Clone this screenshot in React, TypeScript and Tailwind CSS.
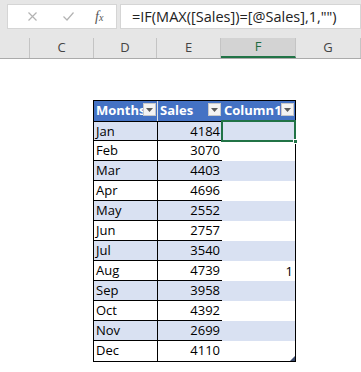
import React from "react";

const months = [
  { m: "Jan", s: 4184, c: "" },
  { m: "Feb", s: 3070, c: "" },
  { m: "Mar", s: 4403, c: "" },
  { m: "Apr", s: 4696, c: "" },
  { m: "May", s: 2552, c: "" },
  { m: "Jun", s: 2757, c: "" },
  { m: "Jul", s: 3540, c: "" },
  { m: "Aug", s: 4739, c: "1" },
  { m: "Sep", s: 3958, c: "" },
  { m: "Oct", s: 4392, c: "" },
  { m: "Nov", s: 2699, c: "" },
  { m: "Dec", s: 4110, c: "" },
];

const font = { fontFamily: '"Open Sans", "Noto Sans", sans-serif' };

function Dropdown() {
  return (
    <div className="absolute right-[1px] top-[2px] flex h-[13px] w-[13px] items-center justify-center border border-[#c8c8c8] bg-[#f3f3f3]">
      <svg width="7" height="4" viewBox="0 0 7 4">
        <path d="M0 0 L7 0 L3.5 4 Z" fill="#5a5a5a" />
      </svg>
    </div>
  );
}

function ColHead({ label, w, selected }: { label: string; w: string; selected?: boolean }) {
  return (
    <div
      className={`flex h-full items-center justify-center border-r border-[#c4c4c4] text-[13px] ${w} ${
        selected ? "border-b-2 border-b-[#217346] bg-[#d3d3d3] text-[#1e6b41]" : "text-[#444]"
      }`}
    >
      {label}
    </div>
  );
}

export default function App() {
  return (
    <div className="h-[372px] w-[361px] overflow-hidden bg-white" style={font}>
      {/* formula bar */}
      <div className="flex h-[35px] items-start gap-[3px] bg-[#e6e6e6] pl-[7px] pt-[4px]">
        <div className="flex h-[25px] w-[110px] items-center border border-[#d5d5d5] bg-white">
          <svg className="ml-[20px]" width="9" height="9" viewBox="0 0 9 9">
            <path d="M0.5 0.5 L8.5 8.5 M8.5 0.5 L0.5 8.5" stroke="#b3b3b3" strokeWidth="1.2" />
          </svg>
          <svg className="ml-[26px]" width="11" height="9" viewBox="0 0 11 9">
            <path d="M0.5 4.5 L4 8 L10.5 0.5" stroke="#b3b3b3" strokeWidth="1.2" fill="none" />
          </svg>
          <span
            className="ml-[21px] text-[14px] italic text-[#555]"
            style={{ fontFamily: '"Liberation Serif", serif' }}
          >
            f<span className="text-[10px]">x</span>
          </span>
        </div>
        <div className="flex h-[25px] flex-1 items-center border border-[#d5d5d5] bg-white pl-[11px] text-[14.5px] text-[#222]">
          =IF(MAX([Sales])=[@Sales],1,"")
        </div>
      </div>

      {/* column headers */}
      <div className="flex h-[24px] bg-[#e6e6e6] pt-[3px]">
        <div className="flex h-full border-b border-[#ababab]">
          <div className="h-full w-[30px] border-r border-[#c4c4c4]" />
          <ColHead label="C" w="w-[64px]" />
          <ColHead label="D" w="w-[63px]" />
          <ColHead label="E" w="w-[64px]" />
          <ColHead label="F" w="w-[75px]" selected />
          <ColHead label="G" w="w-[65px]" />
        </div>
      </div>

      {/* table */}
      <div className="ml-[93px] mt-[41px] w-[203px] border border-black text-[13px] text-black">
        <div className="flex h-[20px] bg-[#4472c4] font-bold text-white">
          <div className="relative w-[64px] overflow-hidden whitespace-nowrap border-r border-[#e0e0e0] pl-[2px] leading-[19px]">
            Months
            <Dropdown />
          </div>
          <div className="relative w-[64px] pl-[2px] leading-[19px]">
            Sales
            <Dropdown />
          </div>
          <div className="relative w-[73px] overflow-hidden whitespace-nowrap pl-[2px] leading-[19px]">
            Column1
            <Dropdown />
          </div>
        </div>
        {months.map((r, i) => (
          <div key={r.m} className={`flex h-[20px] ${i % 2 === 0 ? "bg-[#d9e1f2]" : "bg-white"}`}>
            <div
              className={`w-[64px] border-r border-black pl-[2px] leading-[19px] ${
                i < 11 ? "border-b" : ""
              } ${i === 0 ? "border-t" : ""}`}
            >
              {r.m}
            </div>
            <div
              className={`w-[64px] border-black pr-[2px] text-right leading-[19px] ${i < 11 ? "border-b" : ""} ${
                i === 0 ? "border-t" : ""
              }`}
            >
              {r.s}
            </div>
            <div className="relative w-[73px] pr-[2px] text-right leading-[20px]">
              {r.c}
              {i === 0 && (
                <div className="absolute -bottom-[1px] -left-[1px] -right-[1px] -top-[1px] border-2 border-[#217346]">
                  <div className="absolute -bottom-[4px] -right-[4px] h-[5px] w-[5px] border border-white bg-[#217346]" />
                </div>
              )}
              {i === 11 && (
                <svg className="absolute bottom-0 right-0" width="5" height="5" viewBox="0 0 5 5">
                  <path d="M5 0 L5 5 L0 5 Z" fill="#3b4a6b" />
                </svg>
              )}
            </div>
          </div>
        ))}
      </div>
    </div>
  );
}
